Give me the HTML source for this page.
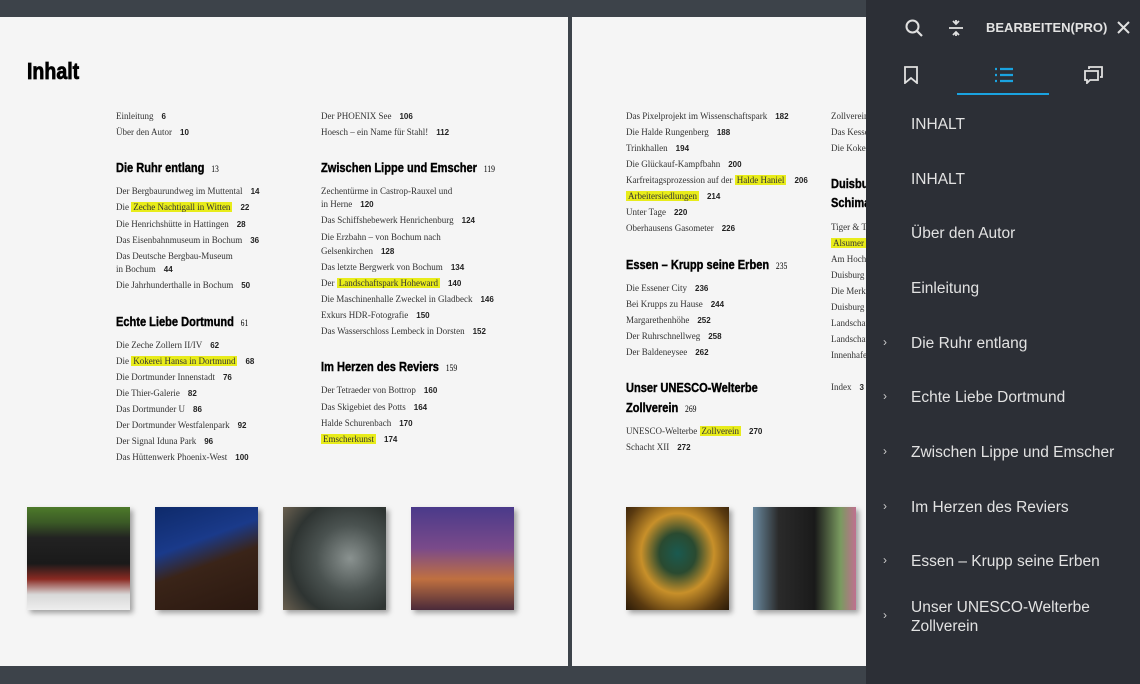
<!DOCTYPE html>
<html><head><meta charset="utf-8"><style>
*{margin:0;padding:0;box-sizing:border-box}
body{width:1140px;height:684px;background:#3d434a;position:relative;overflow:hidden;font-family:"Liberation Serif",serif}
.pg{position:absolute;background:#f5f5f5}
.t{position:absolute;font-size:9px;line-height:12px;color:#333;white-space:nowrap}
.t b{font-family:"Liberation Sans",sans-serif;font-weight:bold;font-size:8px;margin-left:8px;color:#222}
.hl{background:#e8ec1a;padding:0 2px}
.h{position:absolute;font-family:"Liberation Sans",sans-serif;font-weight:bold;font-size:13px;line-height:18px;color:#000;white-space:nowrap;transform:scaleX(.85);transform-origin:left center;-webkit-text-stroke:.4px #000}
.h b{font-family:"Liberation Serif",serif;font-size:9px;margin-left:8px;font-weight:normal;-webkit-text-stroke:0}
.img{position:absolute;width:103px;height:103px;box-shadow:3px 3px 5px rgba(0,0,0,.35)}
.sb{position:absolute;left:866px;top:0;width:274px;height:684px;background:#2c2f36}
.m{position:absolute;left:911px;font-family:"Liberation Sans",sans-serif;font-size:15.5px;color:#e2e2e2;line-height:19px;white-space:nowrap}
.c{position:absolute;left:883px;font-family:"Liberation Sans",sans-serif;font-size:12px;color:#ccc}
</style></head><body>
<div class="pg" style="left:0;top:17px;width:568px;height:649px"></div>
<div class="pg" style="left:572px;top:17px;width:294px;height:649px"></div>

<div style="position:absolute;left:27px;top:58px;font-family:'Liberation Sans',sans-serif;font-weight:bold;font-size:23px;color:#000;transform:scaleX(.85);transform-origin:left;-webkit-text-stroke:.8px #000">Inhalt</div>

<div class="t" style="left:116px;top:110px">Einleitung<b>6</b></div>
<div class="t" style="left:116px;top:126px">Über den Autor<b>10</b></div>
<div class="h" style="left:116px;top:159px">Die Ruhr entlang<b>13</b></div>
<div class="t" style="left:116px;top:185px">Der Bergbaurundweg im Muttental<b>14</b></div>
<div class="t" style="left:116px;top:201px">Die <span class="hl">Zeche Nachtigall in Witten</span><b>22</b></div>
<div class="t" style="left:116px;top:218px">Die Henrichshütte in Hattingen<b>28</b></div>
<div class="t" style="left:116px;top:234px">Das Eisenbahnmuseum in Bochum<b>36</b></div>
<div class="t" style="left:116px;top:250px">Das Deutsche Bergbau-Museum</div>
<div class="t" style="left:116px;top:263px">in Bochum<b>44</b></div>
<div class="t" style="left:116px;top:279px">Die Jahrhunderthalle in Bochum<b>50</b></div>
<div class="h" style="left:116px;top:313px">Echte Liebe Dortmund<b>61</b></div>
<div class="t" style="left:116px;top:339px">Die Zeche Zollern II/IV<b>62</b></div>
<div class="t" style="left:116px;top:355px">Die <span class="hl">Kokerei Hansa in Dortmund</span><b>68</b></div>
<div class="t" style="left:116px;top:371px">Die Dortmunder Innenstadt<b>76</b></div>
<div class="t" style="left:116px;top:387px">Die Thier-Galerie<b>82</b></div>
<div class="t" style="left:116px;top:403px">Das Dortmunder U<b>86</b></div>
<div class="t" style="left:116px;top:419px">Der Dortmunder Westfalenpark<b>92</b></div>
<div class="t" style="left:116px;top:435px">Der Signal Iduna Park<b>96</b></div>
<div class="t" style="left:116px;top:451px">Das Hüttenwerk Phoenix-West<b>100</b></div>

<div class="t" style="left:321px;top:110px">Der PHOENIX See<b>106</b></div>
<div class="t" style="left:321px;top:126px">Hoesch – ein Name für Stahl!<b>112</b></div>
<div class="h" style="left:321px;top:159px">Zwischen Lippe und Emscher<b>119</b></div>
<div class="t" style="left:321px;top:185px">Zechentürme in Castrop-Rauxel und</div>
<div class="t" style="left:321px;top:198px">in Herne<b>120</b></div>
<div class="t" style="left:321px;top:214px">Das Schiffshebewerk Henrichenburg<b>124</b></div>
<div class="t" style="left:321px;top:231px">Die Erzbahn – von Bochum nach</div>
<div class="t" style="left:321px;top:245px">Gelsenkirchen<b>128</b></div>
<div class="t" style="left:321px;top:261px">Das letzte Bergwerk von Bochum<b>134</b></div>
<div class="t" style="left:321px;top:277px">Der <span class="hl">Landschaftspark Hoheward</span><b>140</b></div>
<div class="t" style="left:321px;top:293px">Die Maschinenhalle Zweckel in Gladbeck<b>146</b></div>
<div class="t" style="left:321px;top:309px">Exkurs HDR-Fotografie<b>150</b></div>
<div class="t" style="left:321px;top:325px">Das Wasserschloss Lembeck in Dorsten<b>152</b></div>
<div class="h" style="left:321px;top:358px">Im Herzen des Reviers<b>159</b></div>
<div class="t" style="left:321px;top:384px">Der Tetraeder von Bottrop<b>160</b></div>
<div class="t" style="left:321px;top:401px">Das Skigebiet des Potts<b>164</b></div>
<div class="t" style="left:321px;top:417px">Halde Schurenbach<b>170</b></div>
<div class="t" style="left:321px;top:433px"><span class="hl">Emscherkunst</span><b>174</b></div>

<div class="t" style="left:626px;top:110px">Das Pixelprojekt im Wissenschaftspark<b>182</b></div>
<div class="t" style="left:626px;top:126px">Die Halde Rungenberg<b>188</b></div>
<div class="t" style="left:626px;top:142px">Trinkhallen<b>194</b></div>
<div class="t" style="left:626px;top:158px">Die Glückauf-Kampfbahn<b>200</b></div>
<div class="t" style="left:626px;top:174px">Karfreitagsprozession auf der <span class="hl">Halde Haniel</span><b>206</b></div>
<div class="t" style="left:626px;top:190px"><span class="hl">Arbeitersiedlungen</span><b>214</b></div>
<div class="t" style="left:626px;top:206px">Unter Tage<b>220</b></div>
<div class="t" style="left:626px;top:222px">Oberhausens Gasometer<b>226</b></div>
<div class="h" style="left:626px;top:256px">Essen – Krupp seine Erben<b>235</b></div>
<div class="t" style="left:626px;top:282px">Die Essener City<b>236</b></div>
<div class="t" style="left:626px;top:298px">Bei Krupps zu Hause<b>244</b></div>
<div class="t" style="left:626px;top:314px">Margarethenhöhe<b>252</b></div>
<div class="t" style="left:626px;top:330px">Der Ruhrschnellweg<b>258</b></div>
<div class="t" style="left:626px;top:346px">Der Baldeneysee<b>262</b></div>
<div class="h" style="left:626px;top:379px">Unser UNESCO-Welterbe</div>
<div class="h" style="left:626px;top:399px">Zollverein<b>269</b></div>
<div class="t" style="left:626px;top:425px">UNESCO-Welterbe <span class="hl">Zollverein</span><b>270</b></div>
<div class="t" style="left:626px;top:441px">Schacht XII<b>272</b></div>

<div class="t" style="left:831px;top:110px">Zollverein</div>
<div class="t" style="left:831px;top:126px">Das Kessel</div>
<div class="t" style="left:831px;top:142px">Die Kokerei</div>
<div class="h" style="left:831px;top:175px">Duisburg</div>
<div class="h" style="left:831px;top:194px">Schimanski</div>
<div class="t" style="left:831px;top:221px">Tiger &amp; Turtle</div>
<div class="t" style="left:831px;top:237px"><span class="hl">Alsumer Berg</span></div>
<div class="t" style="left:831px;top:253px">Am Hochofen</div>
<div class="t" style="left:831px;top:269px">Duisburg</div>
<div class="t" style="left:831px;top:285px">Die Merkez</div>
<div class="t" style="left:831px;top:301px">Duisburg</div>
<div class="t" style="left:831px;top:317px">Landschaft</div>
<div class="t" style="left:831px;top:333px">Landschaft</div>
<div class="t" style="left:831px;top:349px">Innenhafen</div>
<div class="t" style="left:831px;top:381px">Index<b>3</b></div>

<div class="img" style="left:27px;top:507px;background:linear-gradient(180deg,#4d7a2a 0,#3b5a26 15%,#222 30%,#1a1a1a 55%,#8a2a22 70%,#d8d8d8 85%,#eee 100%)"></div>
<div class="img" style="left:155px;top:507px;background:linear-gradient(160deg,#0e2a6a 0,#1a3a8a 35%,#3a2418 55%,#2a1810 100%)"></div>
<div class="img" style="left:283px;top:507px;background:radial-gradient(circle at 65% 50%,#8a9290 0,#4a5250 40%,#2e3432 70%,#6a6050 100%)"></div>
<div class="img" style="left:411px;top:507px;background:linear-gradient(180deg,#4a3a8a 0,#7a4a8a 40%,#c07040 70%,#4a2a3a 100%)"></div>
<div class="img" style="left:626px;top:507px;background:radial-gradient(ellipse at 50% 45%,#1a5a50 0,#2a4a30 25%,#c8902a 50%,#5a3a10 80%,#2a1a08 100%)"></div>
<div class="img" style="left:753px;top:507px;background:linear-gradient(90deg,#6a8aa0 0,#2a2a2a 25%,#1a1a1a 60%,#7a9a60 85%,#c07090 100%)"></div>

<div class="sb"></div>
<svg style="position:absolute;left:904px;top:18px" width="20" height="20" viewBox="0 0 20 20"><circle cx="8.5" cy="8.5" r="6" fill="none" stroke="#e0e0e0" stroke-width="2"/><line x1="13" y1="13" x2="18" y2="18" stroke="#e0e0e0" stroke-width="2.2"/></svg>
<svg style="position:absolute;left:947px;top:19px" width="18" height="18" viewBox="0 0 18 18" fill="none" stroke="#e0e0e0" stroke-width="1.8"><line x1="2" y1="9" x2="16" y2="9"/><path d="M6 2l3 3 3-3M9 1v4M6 16l3-3 3 3M9 17v-4"/></svg>
<div style="position:absolute;left:986px;top:20px;font-family:'Liberation Sans',sans-serif;font-size:13px;font-weight:bold;color:#e2e2e2">BEARBEITEN(PRO)</div>
<svg style="position:absolute;left:1117px;top:21px" width="13" height="13" viewBox="0 0 13 13" stroke="#e0e0e0" stroke-width="2"><path d="M1 1l11 11M12 1L1 12"/></svg>
<svg style="position:absolute;left:903px;top:66px" width="16" height="18" viewBox="0 0 16 18" fill="none" stroke="#e0e0e0" stroke-width="1.8"><path d="M2 1h12v16l-6-5-6 5z"/></svg>
<svg style="position:absolute;left:994px;top:67px" width="20" height="16" viewBox="0 0 20 16" stroke="#1aa3e0" stroke-width="2.2"><path d="M1 2h2M6 2h13M1 8h2M6 8h13M1 14h2M6 14h13"/></svg>
<div style="position:absolute;left:957px;top:93px;width:92px;height:2px;background:#1aa3e0"></div>
<svg style="position:absolute;left:1084px;top:66px" width="20" height="18" viewBox="0 0 20 18" fill="none" stroke="#e0e0e0" stroke-width="1.8"><path d="M5 3V1h13v10h-2"/><path d="M1 5h13v9H6l-3 3v-3H1z"/></svg>

<div class="m" style="top:115px">INHALT</div>
<div class="m" style="top:170px">INHALT</div>
<div class="m" style="top:224px">Über den Autor</div>
<div class="m" style="top:279px">Einleitung</div>
<div class="c" style="top:335px">›</div><div class="m" style="top:334px">Die Ruhr entlang</div>
<div class="c" style="top:389px">›</div><div class="m" style="top:388px">Echte Liebe Dortmund</div>
<div class="c" style="top:444px">›</div><div class="m" style="top:443px">Zwischen Lippe und Emscher</div>
<div class="c" style="top:499px">›</div><div class="m" style="top:498px">Im Herzen des Reviers</div>
<div class="c" style="top:553px">›</div><div class="m" style="top:552px">Essen – Krupp seine Erben</div>
<div class="c" style="top:608px">›</div><div class="m" style="top:598px">Unser UNESCO-Welterbe<br>Zollverein</div>
</body></html>
